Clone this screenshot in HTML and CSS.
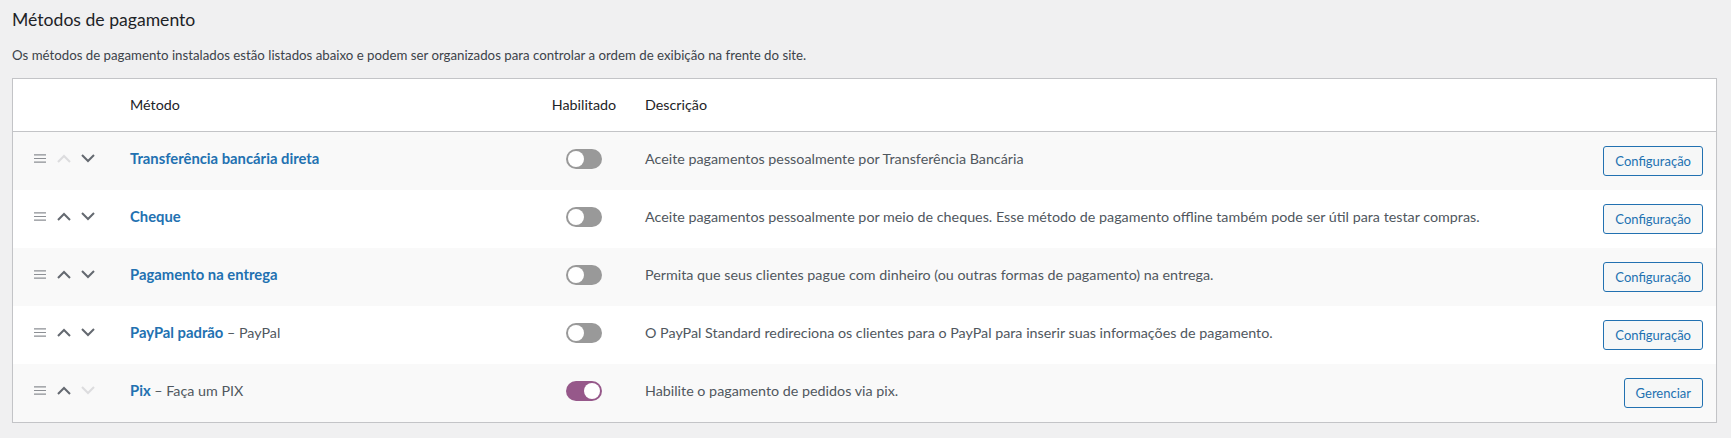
FILE: index.html
```html
<!DOCTYPE html>
<html lang="pt-BR">
<head>
<meta charset="utf-8">
<title>Métodos de pagamento</title>
<link rel="stylesheet" href="styles.css">
</head>
<body>
<div class="wrap">
  <h2 class="title">Métodos de pagamento</h2>
  <p class="intro">Os métodos de pagamento instalados estão listados abaixo e podem ser organizados para controlar a ordem de exibição na frente do site.</p>

  <div class="gateways">
    <div class="row head">
      <div class="cell sort"></div>
      <div class="cell name">Método</div>
      <div class="cell status">Habilitado</div>
      <div class="cell desc">Descrição</div>
      <div class="cell action"></div>
    </div>

    <div class="row alt">
      <div class="cell sort">
        <svg class="ico grip" viewBox="0 0 12 10"><path d="M0 1h12M0 5h12M0 9h12"/></svg>
        <svg class="ico chev off" viewBox="0 0 14 9"><path d="M1 8l6-6 6 6"/></svg>
        <svg class="ico chev" viewBox="0 0 14 9"><path d="M1 1l6 6 6-6"/></svg>
      </div>
      <div class="cell name"><a href="#" class="gw">Transferência bancária direta</a></div>
      <div class="cell status"><span class="toggle"></span></div>
      <div class="cell desc">Aceite pagamentos pessoalmente por Transferência Bancária</div>
      <div class="cell action"><a href="#" class="btn">Configuração</a></div>
    </div>

    <div class="row">
      <div class="cell sort">
        <svg class="ico grip" viewBox="0 0 12 10"><path d="M0 1h12M0 5h12M0 9h12"/></svg>
        <svg class="ico chev" viewBox="0 0 14 9"><path d="M1 8l6-6 6 6"/></svg>
        <svg class="ico chev" viewBox="0 0 14 9"><path d="M1 1l6 6 6-6"/></svg>
      </div>
      <div class="cell name"><a href="#" class="gw">Cheque</a></div>
      <div class="cell status"><span class="toggle"></span></div>
      <div class="cell desc">Aceite pagamentos pessoalmente por meio de cheques. Esse método de pagamento offline também pode ser útil para testar compras.</div>
      <div class="cell action"><a href="#" class="btn">Configuração</a></div>
    </div>

    <div class="row alt">
      <div class="cell sort">
        <svg class="ico grip" viewBox="0 0 12 10"><path d="M0 1h12M0 5h12M0 9h12"/></svg>
        <svg class="ico chev" viewBox="0 0 14 9"><path d="M1 8l6-6 6 6"/></svg>
        <svg class="ico chev" viewBox="0 0 14 9"><path d="M1 1l6 6 6-6"/></svg>
      </div>
      <div class="cell name"><a href="#" class="gw">Pagamento na entrega</a></div>
      <div class="cell status"><span class="toggle"></span></div>
      <div class="cell desc">Permita que seus clientes pague com dinheiro (ou outras formas de pagamento) na entrega.</div>
      <div class="cell action"><a href="#" class="btn">Configuração</a></div>
    </div>

    <div class="row">
      <div class="cell sort">
        <svg class="ico grip" viewBox="0 0 12 10"><path d="M0 1h12M0 5h12M0 9h12"/></svg>
        <svg class="ico chev" viewBox="0 0 14 9"><path d="M1 8l6-6 6 6"/></svg>
        <svg class="ico chev" viewBox="0 0 14 9"><path d="M1 1l6 6 6-6"/></svg>
      </div>
      <div class="cell name"><a href="#" class="gw">PayPal padrão</a> – PayPal</div>
      <div class="cell status"><span class="toggle"></span></div>
      <div class="cell desc">O PayPal Standard redireciona os clientes para o PayPal para inserir suas informações de pagamento.</div>
      <div class="cell action"><a href="#" class="btn">Configuração</a></div>
    </div>

    <div class="row alt">
      <div class="cell sort">
        <svg class="ico grip" viewBox="0 0 12 10"><path d="M0 1h12M0 5h12M0 9h12"/></svg>
        <svg class="ico chev" viewBox="0 0 14 9"><path d="M1 8l6-6 6 6"/></svg>
        <svg class="ico chev off" viewBox="0 0 14 9"><path d="M1 1l6 6 6-6"/></svg>
      </div>
      <div class="cell name"><a href="#" class="gw">Pix</a> – Faça um PIX</div>
      <div class="cell status"><span class="toggle on"></span></div>
      <div class="cell desc">Habilite o pagamento de pedidos via pix.</div>
      <div class="cell action"><a href="#" class="btn">Gerenciar</a></div>
    </div>
  </div>
</div>
</body>
</html>
```
FILE: styles.css
```css
* { box-sizing: border-box; }

html, body {
  margin: 0;
  padding: 0;
  background: #f0f0f1;
}

body {
  font-family: Lato, "Liberation Sans", Arial, sans-serif;
  color: #3c434a;
  font-size: 14.3px;
}

.wrap {
  padding: 0 14px 0 12px;
}

.title {
  margin: 8px 0 0;
  font-size: 17.6px;
  line-height: 24px;
  font-weight: 400;
  color: #1d2327;
}

.intro {
  margin: 13px 0 0;
  font-size: 13.25px;
  line-height: 20px;
  color: #3c434a;
}

.gateways {
  margin-top: 13px;
  background: #fff;
  border: 1px solid #c3c4c7;
  box-shadow: 0 1px 1px rgba(0, 0, 0, 0.04);
}

.row {
  display: grid;
  grid-template-columns: 117px 420px 68px 1fr auto;
  align-items: center;
  height: 58px;
  padding: 0 13px 5px 0;
}

.row.alt {
  background: #f9f9f9;
}

.row.head {
  height: 53px;
  padding-bottom: 1px;
  border-bottom: 1px solid #c3c4c7;
  background: #fff;
  color: #1d2327;
}

.cell {
  white-space: nowrap;
  line-height: 20px;
}

.sort {
  display: flex;
  align-items: center;
  padding-left: 21px;
}

.ico {
  display: block;
  fill: none;
  stroke-linecap: square;
}

.grip {
  width: 12px;
  height: 9px;
  stroke: #8c8f94;
  stroke-width: 1.3;
  margin-right: 11px;
}

.chev {
  width: 14px;
  height: 9px;
  stroke: #646970;
  stroke-width: 2;
  stroke-linecap: butt;
  margin-right: 10px;
}

.chev.off {
  stroke: #dcdcde;
}

.status {
  display: flex;
  justify-content: center;
}

.desc {
  padding-left: 27px;
  color: #50575e;
}

.head .desc {
  color: #1d2327;
}

.gw {
  color: #2271b1;
  font-weight: 700;
  font-size: 14.8px;
  text-decoration: none;
}

.name {
  color: #50575e;
}

.head .name {
  color: #1d2327;
}

.toggle {
  display: block;
  position: relative;
  width: 36px;
  height: 20px;
  border-radius: 10px;
  background: #999;
  margin-left: -1px;
}

.toggle::after {
  content: "";
  position: absolute;
  top: 2px;
  left: 2px;
  width: 16px;
  height: 16px;
  border-radius: 50%;
  background: #fff;
}

.toggle.on {
  background: #96588a;
}

.toggle.on::after {
  left: 18px;
}

.action {
  display: flex;
  justify-content: flex-end;
}

.btn {
  display: inline-block;
  height: 30px;
  line-height: 28px;
  padding: 0 11px;
  margin-top: 5px;
  font-size: 13px;
  color: #2271b1;
  background: #f6f7f7;
  border: 1px solid #2271b1;
  border-radius: 3px;
  text-decoration: none;
}
```
